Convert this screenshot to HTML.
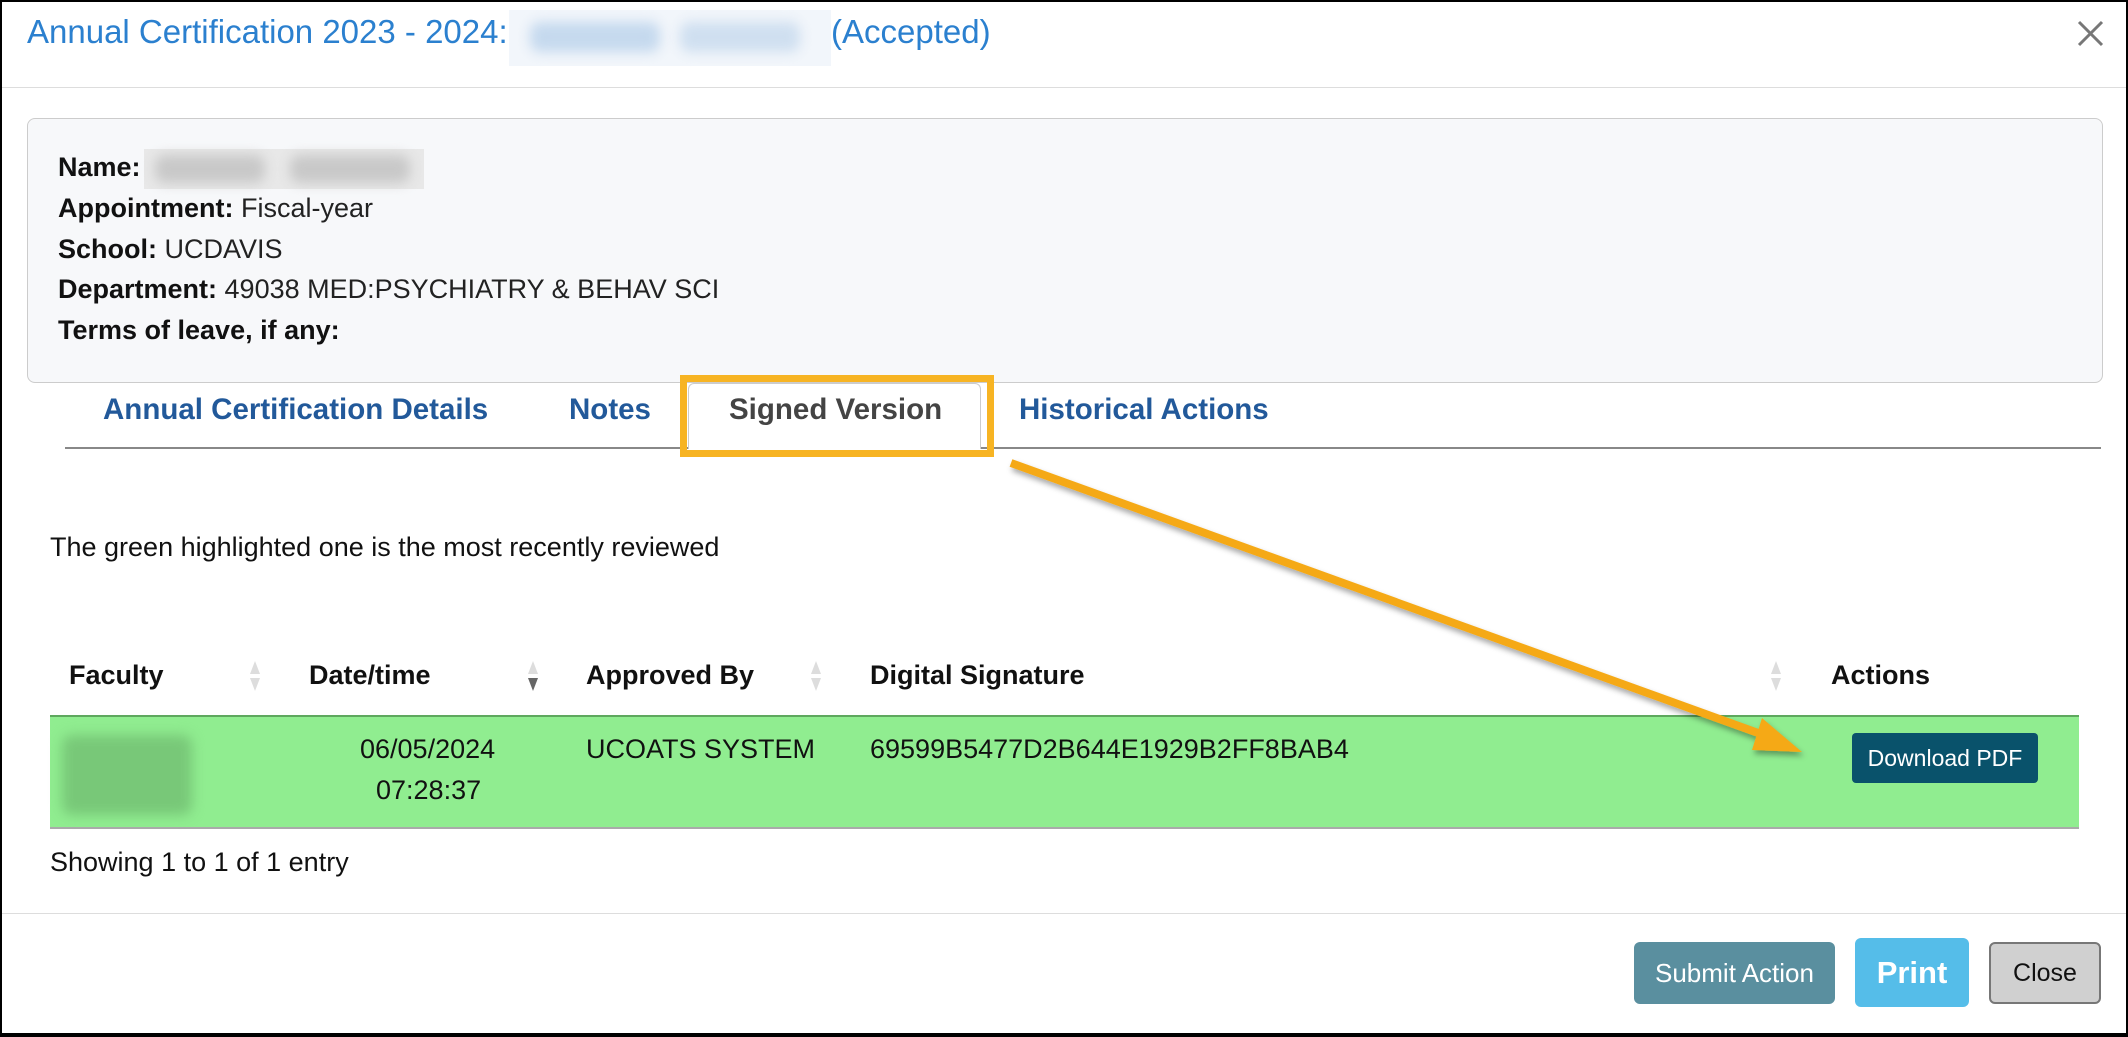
<!DOCTYPE html>
<html><head><meta charset="utf-8"><style>
*{margin:0;padding:0;box-sizing:border-box}
html,body{width:2128px;height:1037px;overflow:hidden;background:#fff;font-family:"Liberation Sans",Arial,sans-serif}
.frame{position:absolute;left:0;top:0;width:2128px;height:1037px;border:2px solid #000;border-bottom:4px solid #000}
.a{position:absolute;white-space:nowrap}
.title{left:27px;top:13px;font-size:33px;color:#2b80cf}
.blur{position:absolute;filter:blur(6px);border-radius:10px}
.info{left:27px;top:118px;width:2076px;height:265px;background:#f7f8fa;border:1px solid #ccc;border-radius:8px}
.ln{font-size:27px;color:#222;left:58px}
.ln b{color:#111}
.tab{font-size:29.5px;font-weight:bold;color:#22599a;top:393px}
.th{font-size:27px;font-weight:bold;color:#111;top:660px}
.td{font-size:27px;color:#111}
.sort{position:absolute;width:12px;height:30px}
</style></head><body>
<div class="frame"></div>
<div class="a title">Annual Certification 2023 - 2024:</div>
<div class="a" style="left:509px;top:10px;width:322px;height:56px;background:#f2f6fb"></div>
<div class="blur" style="left:530px;top:22px;width:130px;height:30px;background:#c5d9ee"></div>
<div class="blur" style="left:680px;top:22px;width:120px;height:30px;background:#cfdff0"></div>
<div class="a title" style="left:831px">(Accepted)</div>
<svg class="a" style="left:2077px;top:20px" width="27" height="27" viewBox="0 0 27 27"><path d="M2 2L25 25M25 2L2 25" stroke="#777" stroke-width="3"/></svg>
<div class="a" style="left:2px;top:87px;width:2124px;height:1px;background:#ddd"></div>

<div class="a info"></div>
<div class="a ln" style="top:152px"><b>Name:</b></div>
<div class="a" style="left:144px;top:149px;width:280px;height:40px;background:#e8e8e8"></div>
<div class="blur" style="left:155px;top:155px;width:110px;height:28px;background:#c8c8c8"></div>
<div class="blur" style="left:290px;top:155px;width:120px;height:28px;background:#c8c8c8"></div>
<div class="a ln" style="top:193px"><b>Appointment:</b> Fiscal-year</div>
<div class="a ln" style="top:234px"><b>School:</b> UCDAVIS</div>
<div class="a ln" style="top:274px"><b>Department:</b> 49038 MED:PSYCHIATRY &amp; BEHAV SCI</div>
<div class="a ln" style="top:315px"><b>Terms of leave, if any:</b></div>

<div class="a" style="left:65px;top:447px;width:2036px;height:2px;background:#888"></div>
<div class="a" style="left:688px;top:383px;width:293px;height:66px;background:#fff;border:1px solid #ccc;border-bottom:none;border-radius:6px 6px 0 0"></div>
<div class="a tab" style="left:103px">Annual Certification Details</div>
<div class="a tab" style="left:569px">Notes</div>
<div class="a tab" style="left:729px;color:#444">Signed Version</div>
<div class="a tab" style="left:1019px">Historical Actions</div>
<div class="a" style="left:680px;top:375px;width:314px;height:82px;border:7px solid #f7b423"></div>

<div class="a td" style="left:50px;top:532px">The green highlighted one is the most recently reviewed</div>

<div class="a th" style="left:69px">Faculty</div>
<div class="a th" style="left:309px">Date/time</div>
<div class="a th" style="left:586px">Approved By</div>
<div class="a th" style="left:870px">Digital Signature</div>
<div class="a th" style="left:1831px">Actions</div>
<svg class="sort" style="left:249px;top:661px" viewBox="0 0 12 30"><path d="M6 0L11 13H1Z" fill="#ddd"/><path d="M6 30L11 17H1Z" fill="#ddd"/></svg>
<svg class="sort" style="left:527px;top:661px" viewBox="0 0 12 30"><path d="M6 0L11 13H1Z" fill="#ddd"/><path d="M6 30L11 17H1Z" fill="#666"/></svg>
<svg class="sort" style="left:810px;top:661px" viewBox="0 0 12 30"><path d="M6 0L11 13H1Z" fill="#ddd"/><path d="M6 30L11 17H1Z" fill="#ddd"/></svg>
<svg class="sort" style="left:1770px;top:661px" viewBox="0 0 12 30"><path d="M6 0L11 13H1Z" fill="#ddd"/><path d="M6 30L11 17H1Z" fill="#ddd"/></svg>

<div class="a" style="left:50px;top:715px;width:2029px;height:114px;background:#90ed90;border-top:2px solid #5ea85e;border-bottom:2px solid #aaa"></div>
<div class="blur" style="left:62px;top:735px;width:130px;height:80px;background:#78c878"></div>
<div class="a td" style="left:360px;top:734px">06/05/2024</div>
<div class="a td" style="left:376px;top:775px">07:28:37</div>
<div class="a td" style="left:586px;top:734px">UCOATS SYSTEM</div>
<div class="a td" style="left:870px;top:734px">69599B5477D2B644E1929B2FF8BAB4</div>
<div class="a" style="left:1852px;top:733px;width:186px;height:50px;background:#09526b;border-radius:4px;color:#fff;font-size:23px;text-align:center;line-height:50px">Download PDF</div>

<svg class="a" style="left:0;top:0" width="2128" height="1037"><defs><filter id="s"><feDropShadow dx="2" dy="4" stdDeviation="3" flood-opacity="0.35"/></filter></defs>
<g filter="url(#s)"><path d="M1011 463L1772 738" stroke="#f5a915" stroke-width="8" fill="none"/><path d="M1802 752L1762 718L1752 750Z" fill="#f5a915"/></g></svg>

<div class="a td" style="left:50px;top:847px">Showing 1 to 1 of 1 entry</div>
<div class="a" style="left:2px;top:913px;width:2124px;height:1px;background:#ddd"></div>
<div class="a" style="left:1634px;top:942px;width:201px;height:62px;background:#5a8f9f;border-radius:6px;color:#fff;font-size:26px;text-align:center;line-height:62px">Submit Action</div>
<div class="a" style="left:1855px;top:938px;width:114px;height:69px;background:#55bde9;border-radius:6px;color:#fff;font-size:31px;font-weight:bold;text-align:center;line-height:69px">Print</div>
<div class="a" style="left:1989px;top:942px;width:112px;height:62px;background:#d0d0d0;border:2px solid #777;border-radius:6px;color:#111;font-size:25px;text-align:center;line-height:58px">Close</div>
</body></html>
